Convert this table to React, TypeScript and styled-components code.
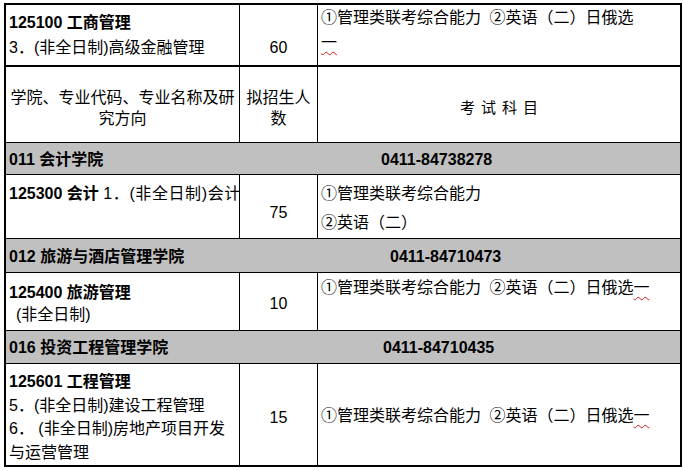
import React from 'react';
import styled, { createGlobalStyle } from 'styled-components';

const Global = createGlobalStyle`
  html, body { margin: 0; padding: 0; background: #fff; }
  body {
    font-family: "Liberation Sans", "Noto Sans CJK SC", sans-serif;
    color: #000;
  }
`;

const Sheet = styled.div`
  margin: 3px 0 0 4px;
  width: 678px;
  box-sizing: border-box;
  border: 2px solid #000;
  font-size: 16px;
`;

const Row = styled.div<{ $h: number; $thick?: boolean }>`
  display: grid;
  grid-template-columns: 234px 78px 1fr;
  height: ${(p) => p.$h}px;
  border-bottom: ${(p) => (p.$thick ? 2 : 1)}px solid #000;
  &:last-child { border-bottom: none; }
`;

const Cell = styled.div<{ $pt: number; $lh: number; $center?: boolean; $ws?: number }>`
  box-sizing: border-box;
  padding: ${(p) => p.$pt}px 0 0 ${(p) => (p.$center ? 0 : 3)}px;
  line-height: ${(p) => p.$lh}px;
  text-align: ${(p) => (p.$center ? 'center' : 'left')};
  word-spacing: ${(p) => p.$ws ?? 0}px;
  white-space: nowrap;
  overflow: hidden;
  border-right: 1px solid #000;
  &:last-child { border-right: none; }
`;

const Line = styled.div<{ $bold?: boolean; $indent?: number }>`
  font-weight: ${(p) => (p.$bold ? 700 : 400)};
  padding-left: ${(p) => p.$indent ?? 0}px;
`;

const Bold = styled.span`
  font-weight: 700;
`;

const Loose = styled.span`
  letter-spacing: 0.6px;
`;

const Spell = styled.span`
  text-decoration: underline wavy #e0201c;
  text-decoration-thickness: 1px;
  text-underline-offset: 3px;
`;

const Spaced = styled.span`
  font-size: 15px;
  letter-spacing: 6px;
  padding-left: 6px;
`;

const GroupRow = styled.div<{ $h: number; $split: number; $pt: number }>`
  display: grid;
  grid-template-columns: ${(p) => p.$split}px 1fr;
  height: ${(p) => p.$h}px;
  box-sizing: border-box;
  padding: ${(p) => p.$pt}px 0 0 3px;
  background: #c0c0c0;
  border-bottom: 1px solid #000;
  font-weight: 700;
  line-height: 24px;
  white-space: nowrap;
`;

type GroupData = { name: string; phone: string; split: number };

const groups: Record<string, GroupData> = {
  g011: { name: '011 会计学院', phone: '0411-84738278', split: 372 },
  g012: { name: '012 旅游与酒店管理学院', phone: '0411-84710473', split: 381 },
  g016: { name: '016 投资工程管理学院', phone: '0411-84710435', split: 374 },
};

function Group({ g, h, pt }: { g: GroupData; h: number; pt: number }) {
  return (
    <GroupRow $h={h} $split={g.split} $pt={pt}>
      <span>{g.name}</span>
      <span>{g.phone}</span>
    </GroupRow>
  );
}

export default function App() {
  return (
    <>
      <Global />
      <Sheet>
        <Row $h={60} $thick>
          <Cell $pt={5} $lh={25}>
            <Line $bold>125100 工商管理</Line>
            <Line>3．(非全日制)高级金融管理</Line>
          </Cell>
          <Cell $pt={30} $lh={25} $center>60</Cell>
          <Cell $pt={0} $lh={25} $ws={4}>
            <Line>①管理类联考综合能力 ②英语（二）日俄选</Line>
            <Line><Spell>一</Spell></Line>
          </Cell>
        </Row>
        <Row $h={75}>
          <Cell $pt={20} $lh={21} $center>
            <Line>学院、专业代码、专业名称及研</Line>
            <Line>究方向</Line>
          </Cell>
          <Cell $pt={20} $lh={21} $center>
            <Line>拟招生人</Line>
            <Line>数</Line>
          </Cell>
          <Cell $pt={30} $lh={21} $center>
            <Spaced>考试科目</Spaced>
          </Cell>
        </Row>
        <Group g={groups.g011} h={32} pt={5} />
        <Row $h={63}>
          <Cell $pt={4} $lh={29}>
            <Line><Bold>125300 会计</Bold> <Loose>1．(非全日制)会计</Loose></Line>
          </Cell>
          <Cell $pt={25} $lh={25} $center>75</Cell>
          <Cell $pt={4} $lh={29}>
            <Line>①管理类联考综合能力</Line>
            <Line>②英语（二）</Line>
          </Cell>
        </Row>
        <Group g={groups.g012} h={34} pt={6} />
        <Row $h={57}>
          <Cell $pt={9} $lh={22}>
            <Line $bold>125400 旅游管理</Line>
            <Line $indent={7}>(非全日制)</Line>
          </Cell>
          <Cell $pt={18} $lh={25} $center>10</Cell>
          <Cell $pt={2} $lh={25} $ws={4}>
            <Line>①管理类联考综合能力 ②英语（二）日俄选<Spell>一</Spell></Line>
          </Cell>
        </Row>
        <Group g={groups.g016} h={33} pt={5} />
        <Row $h={101}>
          <Cell $pt={6} $lh={23.5}>
            <Line $bold>125601 工程管理</Line>
            <Line>5．(非全日制)建设工程管理</Line>
            <Line>6． (非全日制)房地产项目开发</Line>
            <Line>与运营管理</Line>
          </Cell>
          <Cell $pt={41} $lh={25} $center>15</Cell>
          <Cell $pt={39} $lh={25} $ws={4}>
            <Line>①管理类联考综合能力 ②英语（二）日俄选<Spell>一</Spell></Line>
          </Cell>
        </Row>
      </Sheet>
    </>
  );
}
